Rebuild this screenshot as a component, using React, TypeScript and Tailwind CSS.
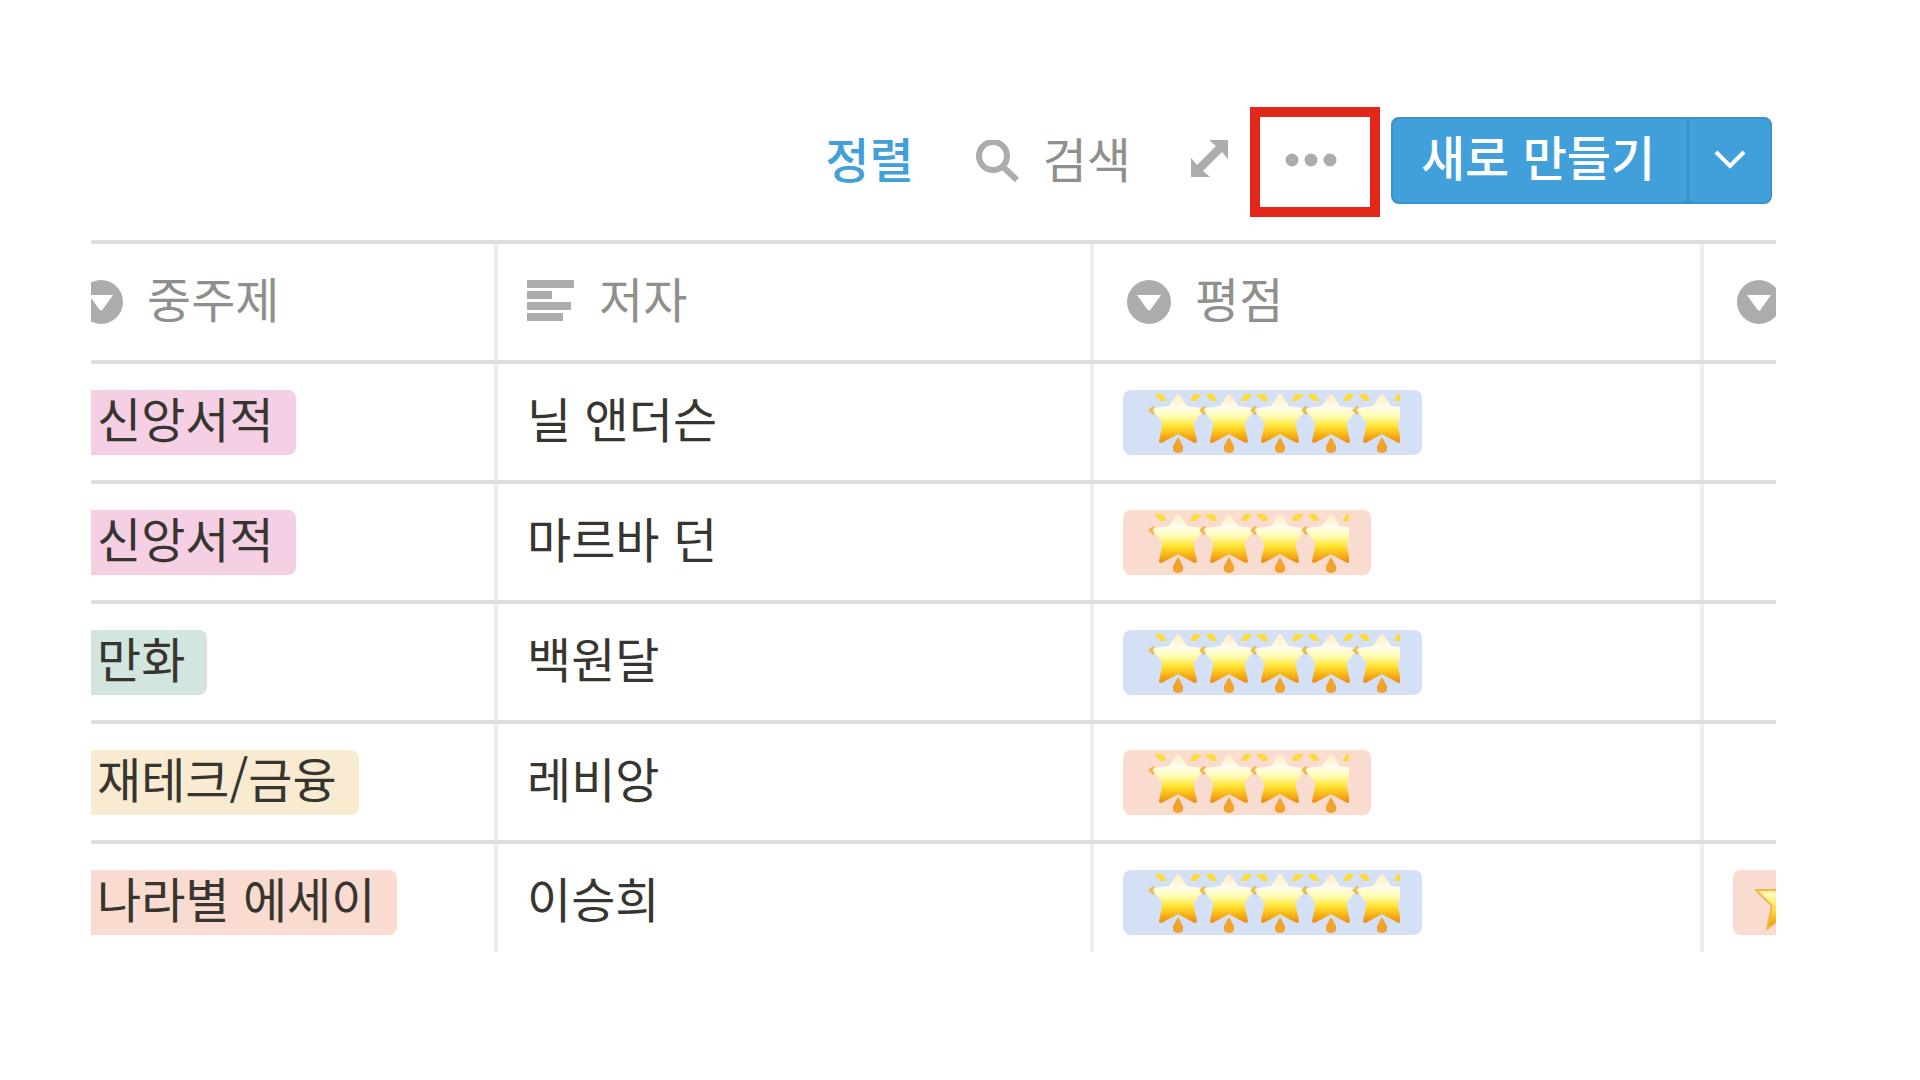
import { useId, type ReactNode } from 'react';

interface Book {
  category: string;
  categoryColor: string;
  author: string;
  rating: number;
  favorite?: boolean;
}

const books: Book[] = [
  { category: '신앙서적', categoryColor: 'bg-[#f5cfe3]', author: '닐 앤더슨', rating: 5 },
  { category: '신앙서적', categoryColor: 'bg-[#f5cfe3]', author: '마르바 던', rating: 4 },
  { category: '만화', categoryColor: 'bg-[#d2e5de]', author: '백원달', rating: 5 },
  { category: '재테크/금융', categoryColor: 'bg-[#f9ebd1]', author: '레비앙', rating: 4 },
  { category: '나라별 에세이', categoryColor: 'bg-[#fadbcf]', author: '이승희', rating: 5, favorite: true },
];

// Hangul sits low in its line box, the bottom padding centres it
function Label({ children }: { children: ReactNode }) {
  return <span className="block pb-[10px] leading-[55px]">{children}</span>;
}

function SelectIcon() {
  return (
    <svg className="w-11 h-11 shrink-0" viewBox="0 0 44 44" aria-hidden="true">
      <circle cx="22" cy="22" r="22" fill="#acacaa" />
      <path d="M10 15h24L24 29q-2 3-4 0z" fill="#fff" />
    </svg>
  );
}

function TextIcon() {
  return (
    <svg className="w-12 h-11 shrink-0" viewBox="0 0 48 44" fill="#acacaa" aria-hidden="true">
      <path d="M0 0h47v8H0zM0 11h25v8H0zM0 22h44v8H0zM0 33h36v8H0z" />
    </svg>
  );
}

function Stars({ count }: { count: number }) {
  const id = useId();
  return (
    <svg
      className="h-[65px]"
      style={{ width: count * 51 }}
      viewBox={`0 0 ${count * 51} 65`}
      role="img"
      aria-label={`별 ${count}개`}
    >
      <defs>
        <linearGradient id={id} x1="0" y1="0" x2="0" y2="1">
          <stop offset="0" stopColor="#fff0c4" />
          <stop offset="0.25" stopColor="#fffdec" />
          <stop offset="0.45" stopColor="#fffbb4" />
          <stop offset="0.65" stopColor="#fde838" />
          <stop offset="0.8" stopColor="#fcc41c" />
          <stop offset="1" stopColor="#ee9018" />
        </linearGradient>
      </defs>
      {Array.from({ length: count }, (_, i) => (
        <g key={i} transform={`translate(${i * 51} 0)`}>
          <path d="M11 5h6l3 5h-4zM55 5h-6l-3 5h4z" fill="#fbdc3a" stroke="#fbdc3a" strokeWidth="2" strokeLinejoin="round" />
          <path d="M3 20l5-4 4 4-4 5zM54 20l5-4 4 4-4 5z" fill="#efb850" />
          <path d="M33 47l5 9v4q-1 3-5 3t-5-3v-4z" fill="#f0a42c" />
          <path
            d="M33 6L41 18L56 20L46 33L50 51L33 42L16 51L20 33L10 20L25 18Z"
            fill={`url(#${id})`}
            stroke={`url(#${id})`}
            strokeWidth="4"
            strokeLinejoin="round"
          />
        </g>
      ))}
    </svg>
  );
}

function SingleStar() {
  const id = useId();
  return (
    <svg className="w-[58px] h-[65px]" viewBox="0 0 58 65" role="img" aria-label="별">
      <defs>
        <linearGradient id={id} x1="0" y1="0" x2="0" y2="1">
          <stop offset="0.25" stopColor="#f6cf6e" />
          <stop offset="0.4" stopColor="#fffbb8" />
          <stop offset="0.7" stopColor="#fdd835" />
          <stop offset="1" stopColor="#ea8f0c" />
        </linearGradient>
      </defs>
      <path
        d="M29 1L37 20H56L41 34L46 59L29 46L12 59L17 36L1 20H21Z"
        fill={`url(#${id})`}
        stroke="#eeb94a"
        strokeWidth="2"
        strokeLinejoin="round"
      />
    </svg>
  );
}

function Toolbar() {
  return (
    <div className="flex items-center justify-end pr-1 text-[#8f8f8c]">
      <button type="button" className="mr-[62px] font-medium text-[#419fd9]">
        <Label>정렬</Label>
      </button>
      <button type="button" className="mr-[60px] flex items-center gap-6">
        <svg className="w-[43px] h-11" viewBox="0 0 43 44" fill="none" stroke="#acacaa" aria-hidden="true">
          <circle cx="17" cy="16" r="14" strokeWidth="6" />
          <path d="M26 26L41 40" strokeWidth="6" />
        </svg>
        <Label>검색</Label>
      </button>
      <button type="button" className="mr-[22px] pb-2" aria-label="전체 화면">
        <svg className="w-[37px] h-[37px]" viewBox="0 0 37 37" fill="#acacaa" aria-hidden="true">
          <path d="M18 0h19v19l-6-7L12 31l7 6H0V18l6 7L25 6z" />
        </svg>
      </button>
      <button
        type="button"
        className="mr-[11px] flex h-[110px] w-[130px] items-center justify-center border-[10px] border-[#e32819] pr-2 pb-1"
        aria-label="더 보기"
      >
        <svg className="w-[52px] h-[14px]" viewBox="0 0 52 14" fill="#acacaa" aria-hidden="true">
          <circle cx="7" cy="7" r="6.5" />
          <circle cx="26" cy="7" r="6.5" />
          <circle cx="45" cy="7" r="6.5" />
        </svg>
      </button>
      <div className="mb-1 flex h-[87px] overflow-hidden rounded-lg border-2 border-[#3a92c8] bg-[#419fd9] text-white">
        <button type="button" className="w-[294px] pr-1 font-medium">
          <Label>새로 만들기</Label>
        </button>
        <button
          type="button"
          className="flex w-[83px] items-center justify-center border-l-2 border-[#3a8dc2]"
          aria-label="템플릿 선택"
        >
          <svg className="w-[32px] h-[20px]" viewBox="0 0 32 20" fill="none" stroke="#fff" strokeWidth="4" aria-hidden="true">
            <path d="M2 2l14 14L30 2" />
          </svg>
        </button>
      </div>
    </div>
  );
}

const headCell = 'border-y-4 border-[#dededc] px-[29px] font-normal shadow-[inset_-4px_0_#ededec]';
const bodyCell = 'border-b-4 border-[#dededc] px-[29px] shadow-[inset_-4px_0_#ededec]';
const tag = 'flex h-[65px] w-fit items-center rounded-lg px-[22px]';

export default function App() {
  return (
    <main
      lang="ko"
      className="bg-white pt-[107px] pr-36 pb-32 pl-[91px] font-['Noto_Sans_CJK_KR',sans-serif] text-[48px] text-[#37352f]"
    >
      <Toolbar />
      <div className="mt-[23px] h-[712px] overflow-hidden">
        {/* scrolled sideways, the first column starts off the left edge */}
        <table className="-ml-[45px] w-[2272px] table-fixed border-separate border-spacing-0 whitespace-nowrap text-left">
          <colgroup>
            <col className="w-[452px]" />
            <col className="w-[596px]" />
            <col className="w-[610px]" />
            <col />
          </colgroup>
          <thead className="text-[#8f8f8c]">
            <tr className="h-[124px]">
              <th scope="col" className={headCell}>
                <div className="flex items-center gap-6 pl-1"><SelectIcon /><Label>중주제</Label></div>
              </th>
              <th scope="col" className={headCell}>
                <div className="flex items-center gap-6"><TextIcon /><Label>저자</Label></div>
              </th>
              <th scope="col" className={headCell}>
                <div className="flex items-center gap-6 pl-1"><SelectIcon /><Label>평점</Label></div>
              </th>
              <th scope="col" className={headCell} aria-label="추천">
                <div className="flex items-center pl-1"><SelectIcon /></div>
              </th>
            </tr>
          </thead>
          <tbody>
            {books.map((book) => (
              <tr key={book.author} className="h-[120px]">
                <td className={bodyCell}>
                  <span className={`${tag} ${book.categoryColor}`}>
                    <Label>{book.category}</Label>
                  </span>
                </td>
                <td className={bodyCell}>
                  <Label>{book.author}</Label>
                </td>
                <td className={bodyCell}>
                  <span className={`${tag} ${book.rating === 5 ? 'bg-[#d4e0f6]' : 'bg-[#fadbcf]'}`}>
                    <Stars count={book.rating} />
                  </span>
                </td>
                <td className={bodyCell}>
                  {book.favorite && (
                    <span className={`${tag} bg-[#fadbcf]`}>
                      <SingleStar />
                    </span>
                  )}
                </td>
              </tr>
            ))}
          </tbody>
        </table>
      </div>
    </main>
  );
}
